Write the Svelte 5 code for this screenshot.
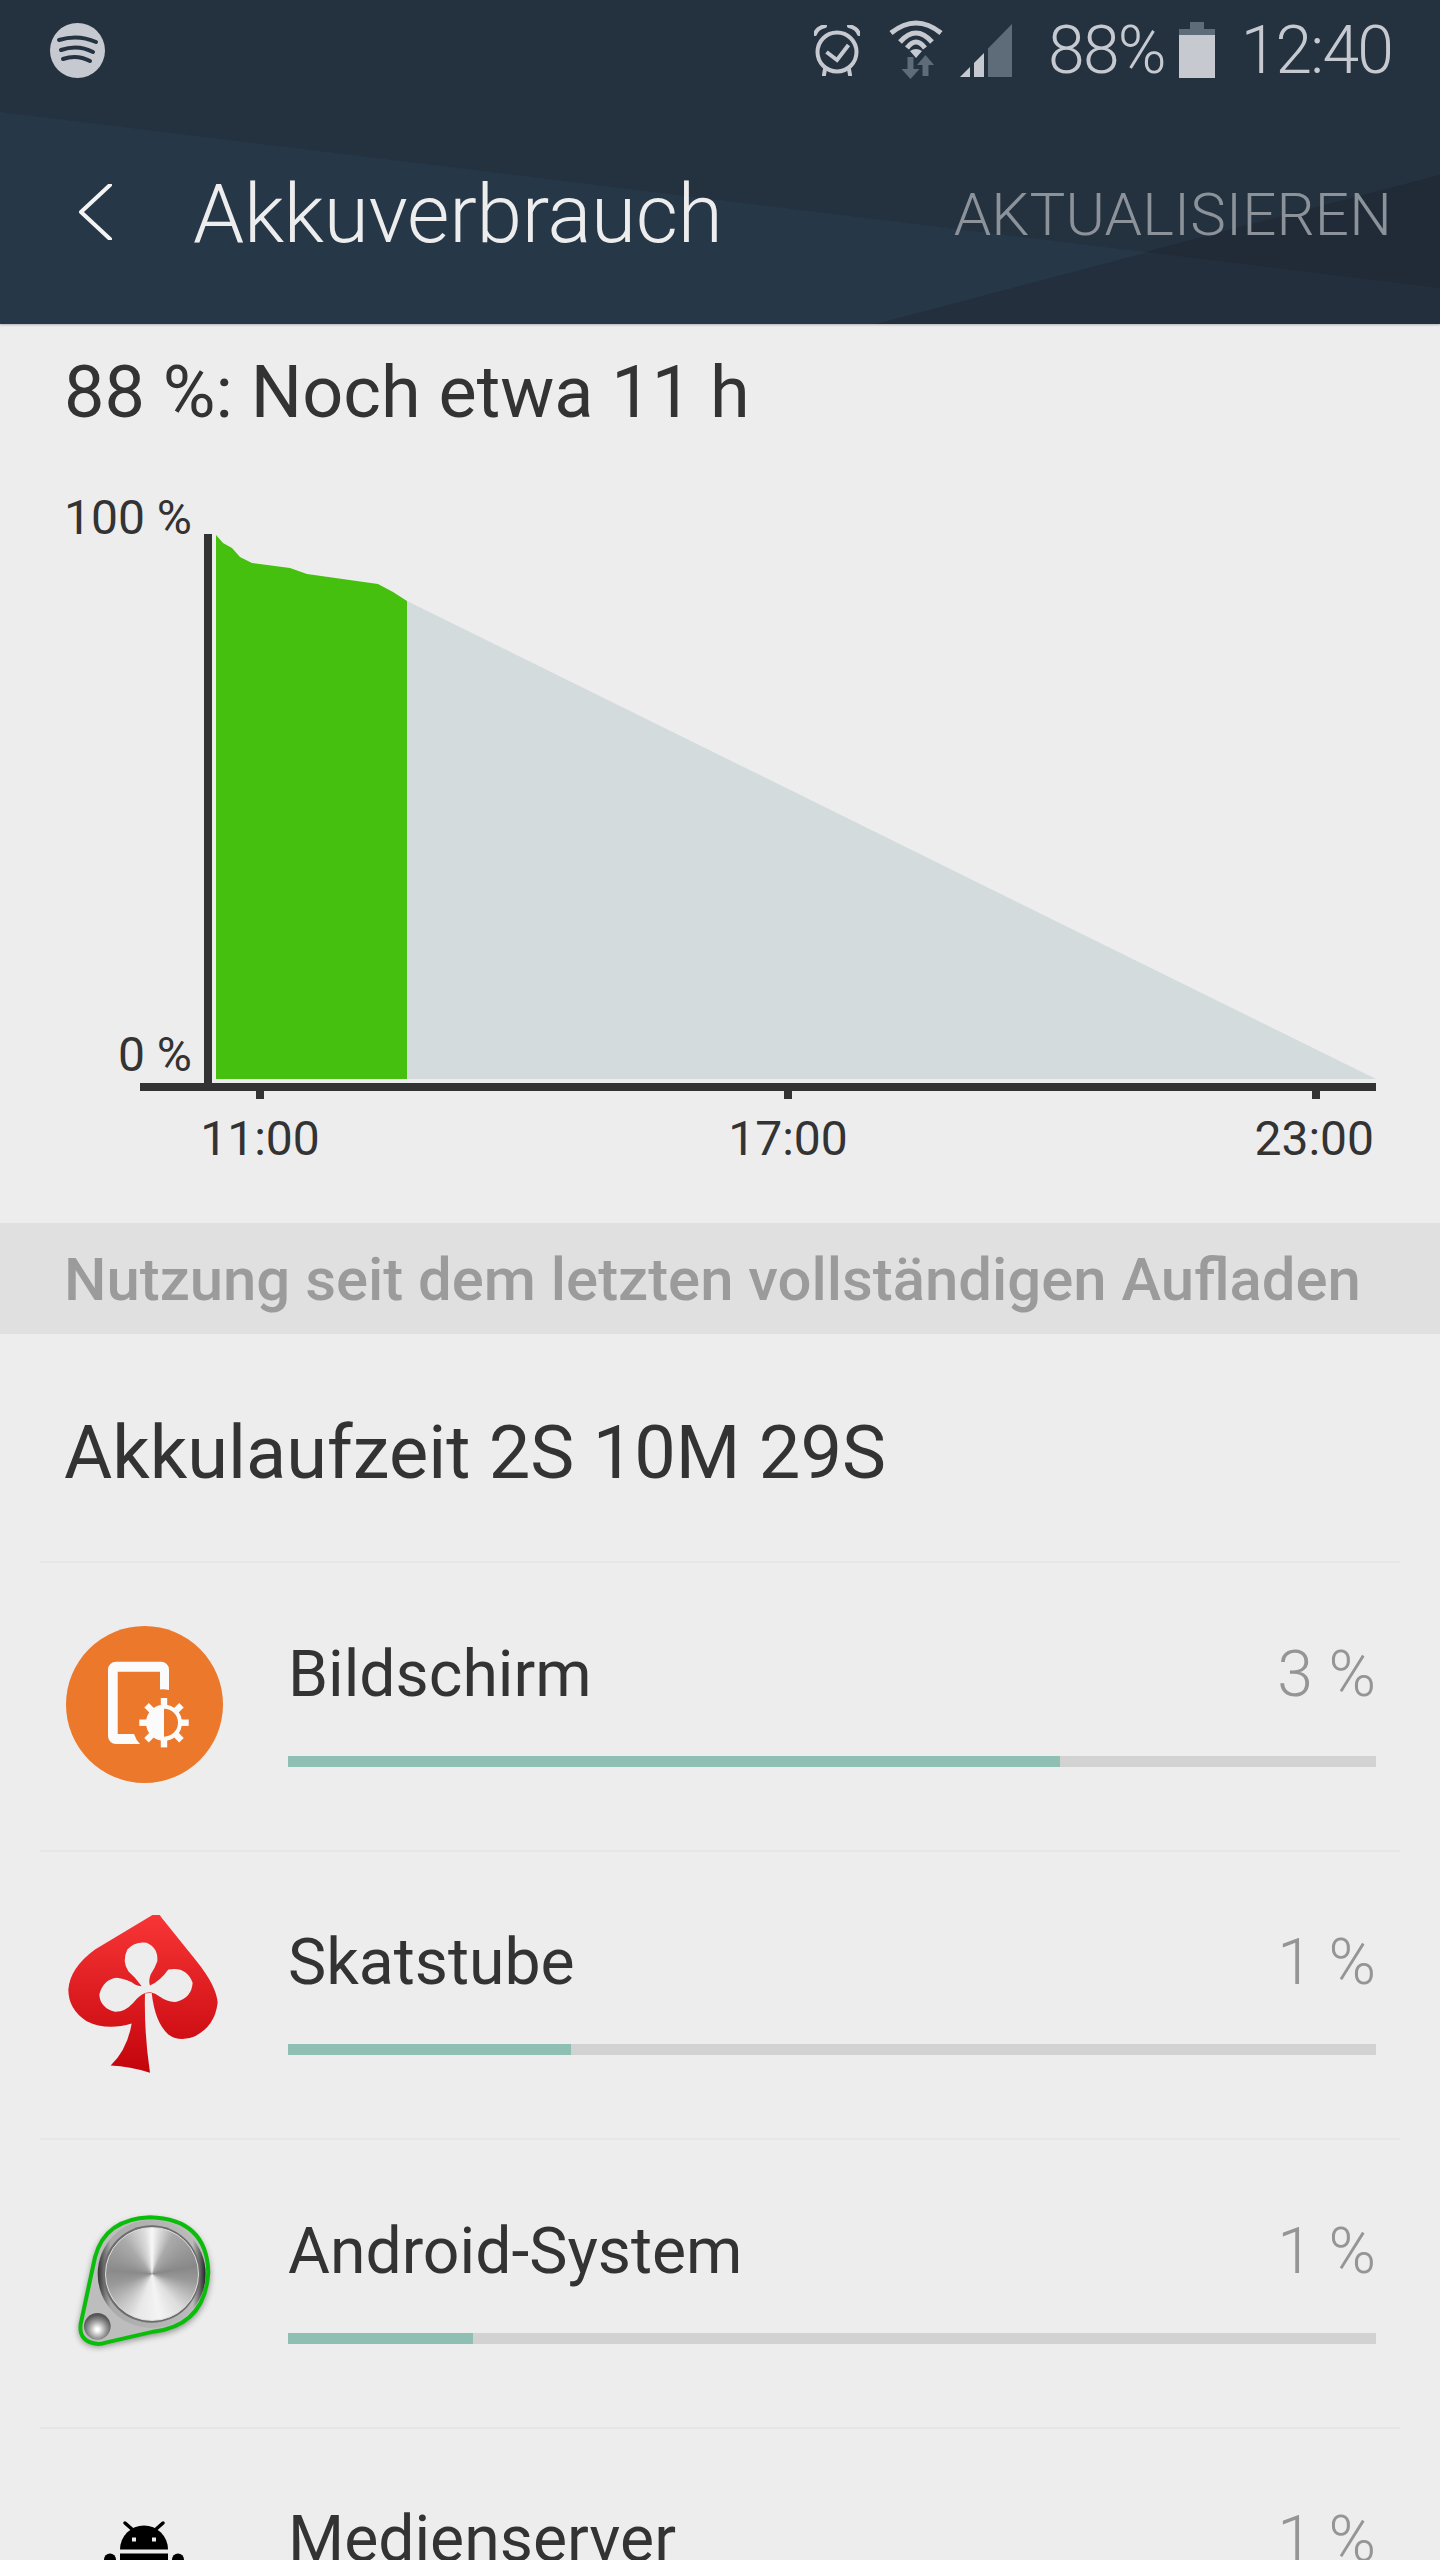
<script>
  const rows = [
    { name: 'Bildschirm', pct: 3, fill: 71, icon: 'screen' },
    { name: 'Skatstube', pct: 1, fill: 26, icon: 'spade' },
    { name: 'Android-System', pct: 1, fill: 17, icon: 'knob' },
    { name: 'Medienserver', pct: 1, fill: 10, icon: 'droid' }
  ];
  const spokes = [0, 45, 90, 135, 180, 225, 270, 315];
</script>

<div class="page">
  <header class="head">
    <svg class="facets" viewBox="0 0 1440 324" preserveAspectRatio="none" aria-hidden="true">
      <polygon points="0,112 1440,288 1440,324 0,324" fill="#263748" />
      <polygon points="876,324 1440,175 1440,324" fill="#232f3d" />
      <polygon points="1145,252 1440,175 1440,288" fill="#212b37" />
    </svg>
    <div class="status">
      <svg class="spotify" viewBox="0 0 55 55" aria-hidden="true">
        <ellipse cx="27.5" cy="27.5" rx="27.5" ry="27.5" fill="#c6cad0" />
        <path d="M9 17q19-6 37 2M11 27Q28 21 43 29M13 36Q27 31 40 38" fill="none" stroke="#25323f" stroke-width="4" stroke-linecap="round" />
      </svg>
      <div class="status-right">
        <svg class="alarm" viewBox="0 0 46 51" aria-hidden="true">
          <circle cx="23" cy="27" r="19.5" fill="none" stroke="#c6cad0" stroke-width="4" />
          <path d="M12.5 27l10.5 8 11.5-15" fill="none" stroke="#c6cad0" stroke-width="4" />
          <path d="M1 9Q3 3 11 1M45 9Q43 3 35 1M11 44l-1 6M35 44l1 6" fill="none" stroke="#c6cad0" stroke-width="4" stroke-linecap="round" />
        </svg>
        <svg class="wifi" viewBox="0 0 54 60" aria-hidden="true">
          <path d="M2 13Q27-7 52 13M11 22Q27 4 43 22M18 28Q27 16 36 28" fill="none" stroke="#c6cad0" stroke-width="5" />
          <path d="M21 31Q27 27 33 31L27 38Z" fill="#c6cad0" />
          <path d="M18.5 37h6v12h6l-9 10-9-10h6zM33.5 56V45H28l8.5-10L45 45h-5.5v11z" fill="#5e6b78" />
        </svg>
        <svg class="signal" viewBox="0 0 52 53" aria-hidden="true">
          <polygon points="28,53 28,24.5 52,0 52,53" fill="#5e6b78" />
          <polygon points="0,53 10,43 10,53" fill="#c6cad0" />
          <polygon points="14,53 14,39 24,29 24,53" fill="#c6cad0" />
        </svg>
        <span class="pct">88%</span>
        <svg class="battery" viewBox="0 0 36 56" aria-hidden="true">
          <path d="M11 0h14v7h11v49H0V7h11z" fill="#5e6b78" />
          <rect y="13" width="36" height="43" fill="#c6cad0" />
        </svg>
        <span class="clock">12:40</span>
      </div>
    </div>
    <div class="bar">
      <svg class="back" viewBox="0 0 34 56" aria-hidden="true">
        <path d="M32 1L3 28l29 27" fill="none" stroke="#f4f4f4" stroke-width="4" stroke-linecap="round" stroke-linejoin="round" />
      </svg>
      <h1>Akkuverbrauch</h1>
      <span class="refresh">AKTUALISIEREN</span>
    </div>
  </header>

  <section class="summary">
    <p class="remaining">88 %: Noch etwa 11 h</p>
    <svg class="chart" viewBox="0 110 1440 789" aria-label="Akkuverlauf">
      <polygon points="407,277 1376,755 407,755" fill="#d3dbdc" />
      <polygon
        points="216,211 223,219 232,224 240,233 252,239 290,244 307,250 378,260 393,268 407,277 407,755 216,755"
        fill="#46c00f"
      />
      <g fill="#333">
        <rect x="204" y="210" width="8" height="557" />
        <rect x="140" y="759" width="1236" height="8" />
        <rect x="256" y="767" width="8" height="8" />
        <rect x="784" y="767" width="8" height="8" />
        <rect x="1312" y="767" width="8" height="8" />
      </g>
      <g class="axis">
        <text x="192" y="210" text-anchor="end">100 %</text>
        <text x="192" y="747" text-anchor="end">0 %</text>
        <text x="260" y="831" text-anchor="middle">11:00</text>
        <text x="788" y="831" text-anchor="middle">17:00</text>
        <text x="1374" y="831" text-anchor="end">23:00</text>
      </g>
    </svg>
  </section>

  <div class="band">Nutzung seit dem letzten vollständigen Aufladen</div>

  <p class="runtime">Akkulaufzeit 2S 10M 29S</p>

  <ul class="list">
    {#each rows as row}
      <li class="row">
        <div class="icon">
          {#if row.icon === 'screen'}
            <svg viewBox="0 0 160 160" aria-hidden="true">
              <circle cx="80.5" cy="78.5" r="78.5" fill="#ec782c" />
              <path
                d="M52 35.7h45a8 8 0 0 1 8 8V64q-5-1-9-.5V45.7H53.7V108H70q2 6 6 10H52a8 8 0 0 1-8-8V43.7a8 8 0 0 1 8-8z"
                fill="#fbfbfb"
              />
              <g transform="translate(100 96.7)">
                <circle r="16" fill="none" stroke="#fbfbfb" stroke-width="4" />
                <path d="M0-16a16 16 0 0 0 0 32z" fill="#fbfbfb" />
                {#each spokes as a}
                  <rect x="-3.2" y="-24.7" width="6.4" height="9" fill="#fbfbfb" transform="rotate({a})" />
                {/each}
              </g>
            </svg>
          {:else if row.icon === 'spade'}
            <svg class="soft" viewBox="0 0 160 160" aria-hidden="true">
              <defs>
                <linearGradient id="red" x1="0" y1="0" x2="0" y2="1">
                  <stop offset="0" stop-color="#f83636" />
                  <stop offset="1" stop-color="#c4040c" />
                </linearGradient>
              </defs>
              <g transform="translate(-24 -25.5) scale(0.3333)">
                <path
                  fill="url(#red)"
                  d="M350 72Q358 72 365 85L470 215Q530 290 533 340 525 410 465 440 420 460 385 435 345 400 335 310L315 312Q312 430 330 550 270 530 212 528 262 480 275 402 200 425 140 395 85 360 85 300 90 235 165 180L340 75Z"
                />
                <path
                  fill="#ededed"
                  d="M305 290Q285 262 265 245 245 215 262 180 285 155 320 160 355 175 352 215 345 235 332 255 325 275 330 288 360 275 385 240 440 230 458 280 455 325 410 337 385 340 360 322 345 310 332 308L318 310Q300 315 280 340 255 368 225 367 180 355 178 315 190 270 230 265 265 270 285 285 295 290 305 290Z"
                />
              </g>
            </svg>
          {:else if row.icon === 'knob'}
            <svg class="soft" viewBox="0 0 160 160" aria-hidden="true">
              <defs>
                <linearGradient id="rim" x1="0" y1="0" x2="1" y2="0">
                  <stop offset="0" stop-color="#333" />
                  <stop offset="0.12" stop-color="#aaa" />
                  <stop offset="0.88" stop-color="#bbb" />
                  <stop offset="1" stop-color="#222" />
                </linearGradient>
                <radialGradient id="ball" cx="0.5" cy="0.62" r="0.55">
                  <stop offset="0.1" stop-color="#fff" />
                  <stop offset="0.6" stop-color="#999" />
                  <stop offset="1" stop-color="#555" />
                </radialGradient>
                <filter id="blur" x="-20%" y="-20%" width="140%" height="140%">
                  <feGaussianBlur stdDeviation="10" />
                </filter>
              </defs>
              <g transform="translate(-24 -34) scale(0.3333)">
                <path
                  class="knob-shadow"
                  d="M175 535Q110 530 117 470L160 270Q190 155 330 150 505 155 510 320 500 480 340 500L200 530Z"
                  filter="url(#blur)"
                />
                <path
                  d="M175 525Q115 520 122 465L165 265Q195 150 330 145 500 150 505 310 495 470 340 488L200 520Q185 525 175 525Z"
                  fill="#bdbdbd"
                  stroke="#0bbd0b"
                  stroke-width="12"
                />
                <circle cx="335" cy="315" r="162" fill="url(#rim)" />
                <circle cx="335" cy="315" r="146" fill="#6d6d6d" />
                <circle cx="172" cy="472" r="40" fill="url(#ball)" />
              </g>
            </svg>
            <div class="metal"></div>
          {:else}
            <svg viewBox="0 0 160 160" aria-hidden="true">
              <path d="M61 31l7.7 6.7M99 31l-7.7 6.7" stroke="#000" stroke-width="3.5" stroke-linecap="round" />
              <path d="M56 57.5a24 24 0 0 1 48 0z" fill="#000" />
              <rect x="68" y="45.5" width="4" height="4" fill="#ededed" />
              <rect x="88" y="45.5" width="4" height="4" fill="#ededed" />
              <rect x="56" y="61.5" width="48" height="50" fill="#000" />
              <rect x="40" y="61.5" width="12" height="36" rx="6" fill="#000" />
              <rect x="108" y="61.5" width="12" height="36" rx="6" fill="#000" />
            </svg>
          {/if}
        </div>
        <div class="info">
          <div class="line">
            <span class="name">{row.name}</span>
            <span class="value">{row.pct} %</span>
          </div>
          <div class="track"><div class="fill" style="width: {row.fill}%"></div></div>
        </div>
      </li>
    {/each}
  </ul>
</div>

<style>
  :global(body) {
    margin: 0;
    background: #ededed;
  }

  .page {
    height: 2560px;
    overflow: hidden;
    background: #ededed;
    font-family: Roboto, sans-serif;
    color: #333;
  }

  .head {
    position: relative;
    height: 324px;
    background: #24313f;
    box-shadow: 0 1px 2px rgba(0, 0, 0, 0.25);
  }

  .facets {
    position: absolute;
    inset: 0;
    width: 100%;
    height: 100%;
  }

  .status,
  .bar {
    position: relative;
    display: flex;
    align-items: center;
  }

  .status {
    height: 100px;
    padding: 0 48px 0 50px;
    justify-content: space-between;
  }

  .spotify {
    width: 55px;
    height: 55px;
  }

  .status-right {
    display: flex;
    align-items: center;
    color: #c6cad0;
    font-weight: 300;
    font-size: 66px;
    letter-spacing: -1.8px;
  }

  .alarm {
    width: 46px;
    height: 51px;
    margin-right: 29px;
  }

  .wifi {
    width: 54px;
    height: 60px;
    margin-right: 17px;
  }

  .signal {
    width: 52px;
    height: 53px;
    margin-right: 36px;
  }

  .pct {
    margin-right: 14px;
  }

  .battery {
    width: 36px;
    height: 56px;
    margin-right: 26px;
  }

  .bar {
    height: 220px;
    padding: 4px 48px 0 78px;
  }

  .back {
    width: 34px;
    height: 56px;
    margin-right: 81px;
    margin-bottom: 4px;
  }

  h1 {
    margin: 0;
    font-size: 82px;
    font-weight: 300;
    color: #ededed;
    letter-spacing: -0.3px;
    flex: 1;
  }

  .refresh {
    font-size: 60px;
    font-weight: 300;
    color: #8b929a;
    letter-spacing: 0.2px;
  }

  .summary {
    height: 899px;
  }

  .remaining {
    margin: 0;
    padding: 28px 64px 0;
    font-size: 72px;
    line-height: 82px;
  }

  .chart {
    display: block;
    width: 1440px;
    height: 789px;
  }

  .axis {
    font-family: Roboto, sans-serif;
    font-size: 48px;
    fill: #333;
  }

  .band {
    height: 108px;
    padding: 3px 64px 0;
    background: #e0e0e0;
    color: #9b9b9b;
    font-size: 59.85px;
    font-weight: 500;
    line-height: 108px;
    white-space: nowrap;
  }

  .runtime {
    margin: 0;
    height: 227px;
    padding: 0 64px;
    font-size: 74px;
    line-height: 237px;
  }

  .list {
    margin: 0 40px;
    padding: 0;
    list-style: none;
  }

  .row {
    display: flex;
    align-items: center;
    height: 286.5px;
    border-top: 2px solid #e6e6e6;
  }

  .icon {
    position: relative;
    width: 160px;
    height: 160px;
    margin-left: 24px;
    margin-right: 64px;
  }

  .icon svg {
    display: block;
    width: 160px;
    height: 160px;
  }

  .icon .soft {
    filter: blur(0.6px);
  }

  .metal {
    position: absolute;
    left: 41px;
    top: 24px;
    width: 92px;
    height: 92px;
    border: 1px solid #ddd;
    border-radius: 50%;
    filter: blur(0.6px);
    background: conic-gradient(
      #f8f8f8 0deg,
      #aaa 28deg,
      #888 80deg,
      #999 100deg,
      #ddd 140deg,
      #f4f4f4 170deg,
      #e8e8e8 200deg,
      #999 255deg,
      #8a8a8a 275deg,
      #aaa 320deg,
      #ddd 350deg,
      #f8f8f8 360deg
    );
  }

  .knob-shadow {
    fill: rgba(0, 0, 0, 0.4);
  }

  .info {
    flex: 1;
    margin-right: 24px;
    padding-bottom: 10px;
  }

  .line {
    display: flex;
    justify-content: space-between;
    font-size: 64.3px;
    line-height: 76px;
  }

  .value {
    color: #959595;
    font-weight: 300;
  }

  .track {
    height: 11px;
    margin-top: 44px;
    background: #d2d2d2;
  }

  .fill {
    height: 100%;
    background: #8fbfb3;
  }
</style>
